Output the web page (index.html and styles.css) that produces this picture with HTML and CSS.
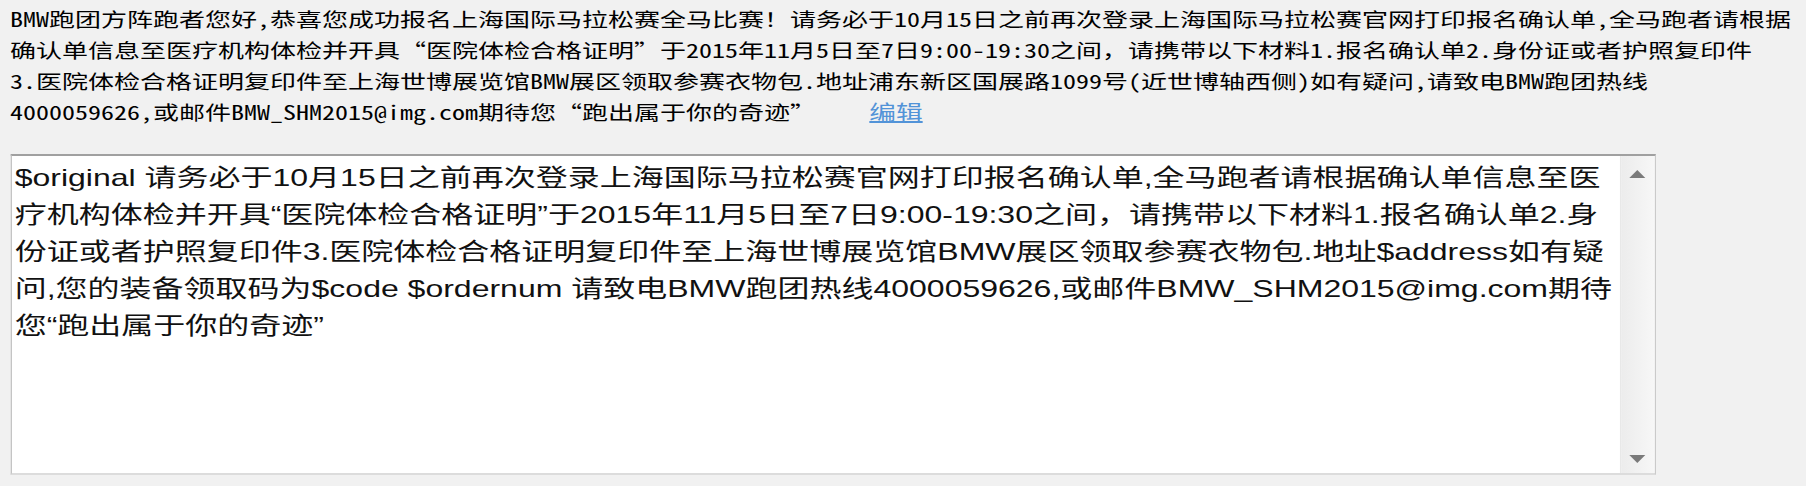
FILE: index.html
```html
<!DOCTYPE html>
<html lang="zh-CN">
<head>
<meta charset="utf-8">
<title>BMW跑团 报名通知</title>
<link rel="stylesheet" href="styles.css">
</head>
<body>
<div class="page">
  <p class="notice">BMW跑团方阵跑者您好,恭喜您成功报名上海国际马拉松赛全马比赛！请务必于10月15日之前再次登录上海国际马拉松赛官网打印报名确认单,全马跑者请根据<br>确认单信息至医疗机构体检并开具“医院体检合格证明”于2015年11月5日至7日9:00-19:30之间，请携带以下材料1.报名确认单2.身份证或者护照复印件<br>3.医院体检合格证明复印件至上海世博展览馆BMW展区领取参赛衣物包.地址浦东新区国展路1099号(近世博轴西侧)如有疑问,请致电BMW跑团热线<br>4000059626,或邮件BMW_SHM2015@img.com期待您“跑出属于你的奇迹”<a class="edit-link" href="#">编辑</a></p>
  <div class="editor">
    <div class="editor-text">$original 请务必于10月15日之前再次登录上海国际马拉松赛官网打印报名确认单,全马跑者请根据确认单信息至医<br>疗机构体检并开具“医院体检合格证明”于2015年11月5日至7日9:00-19:30之间，请携带以下材料1.报名确认单2.身<br>份证或者护照复印件3.医院体检合格证明复印件至上海世博展览馆BMW展区领取参赛衣物包.地址$address如有疑<br>问,您的装备领取码为$code $ordernum 请致电BMW跑团热线4000059626,或邮件BMW_SHM2015@img.com期待<br>您“跑出属于你的奇迹”</div>
    <div class="scrollbar">
      <span class="arrow arrow-up"></span>
      <span class="arrow arrow-down"></span>
    </div>
  </div>
</div>
</body>
</html>
```
FILE: styles.css
```css
html, body {
  margin: 0;
  padding: 0;
  background: #f1f1f1;
}

.page {
  width: 1354.5px;
  box-sizing: border-box;
  padding: 3px 0 0 7.5px;
  transform: scaleX(1.3333);
  transform-origin: 0 0;
}

.notice {
  margin: 0;
  font-family: "Noto Sans Mono CJK SC", "Noto Sans CJK SC", monospace;
  font-size: 19.5px;
  line-height: 31px;
  color: #000;
  white-space: nowrap;
}

.edit-link {
  margin-left: 40px;
  font-family: "Noto Sans CJK SC", sans-serif;
  font-size: 20px;
  color: #5293d8;
  text-decoration: underline;
}

.editor {
  display: flex;
  box-sizing: border-box;
  width: 1234px;
  height: 321px;
  margin-top: 27px;
  background: #fff;
  border-style: solid;
  border-width: 2px 1.5px 2px 1.5px;
  border-color: #a0a0a0 #c8c8c8 #dcdcdc #c4c4c4;
}

.editor-text {
  flex: 1;
  overflow: hidden;
  padding: 3px 2.5px;
  font-family: "Liberation Sans", "Noto Sans CJK SC", sans-serif;
  font-size: 24px;
  line-height: 37px;
  color: #111;
  white-space: nowrap;
}

.scrollbar {
  display: flex;
  flex-direction: column;
  justify-content: space-between;
  align-items: center;
  width: 26px;
  padding: 14px 0 10px;
  box-sizing: border-box;
  background: linear-gradient(to right, #ececec, #f7f7f7);
  border-left: 1px solid #e8e8e8;
}

.arrow {
  width: 0;
  height: 0;
  border-left: 6.5px solid transparent;
  border-right: 6.5px solid transparent;
}

.arrow-up {
  border-bottom: 8px solid #7a7a7a;
}

.arrow-down {
  border-top: 8px solid #7a7a7a;
}
```
